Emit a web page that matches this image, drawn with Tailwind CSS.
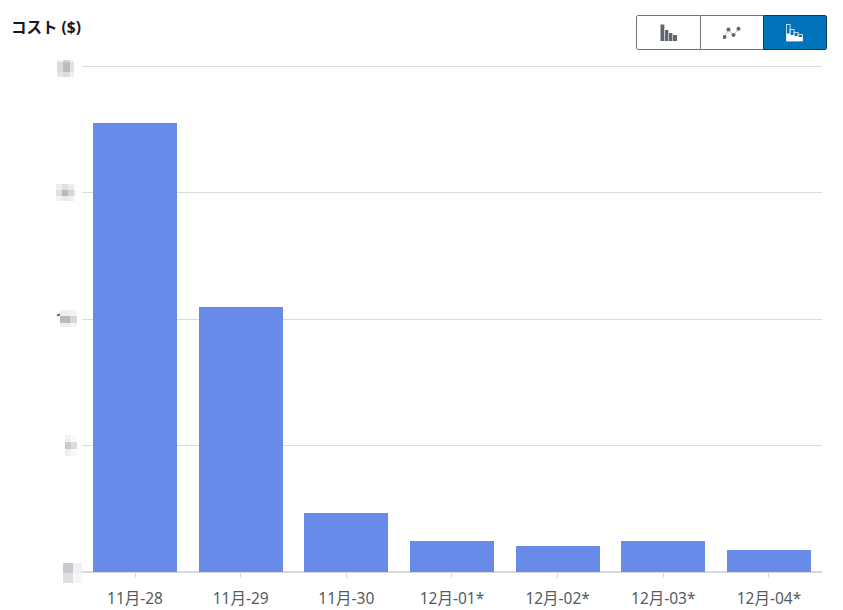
<!DOCTYPE html>
<html lang="ja">
<head>
<meta charset="utf-8">
<script src="https://cdn.jsdelivr.net/npm/@tailwindcss/browser@4"></script>
</head>
<body class="bg-white">
<div class="relative w-[843px] h-[610px] overflow-hidden font-['Noto_Sans','Noto_Sans_CJK_JP',sans-serif]">
  <!-- header -->
  <div class="flex items-start justify-between pl-[11px] pr-4 pt-[15px] h-[66px]">
    <h2 class="text-[15.5px] leading-[24px] font-bold text-[#16191f]">コスト ($)</h2>
    <div class="flex w-[191px] h-[35px] rounded-[2px] overflow-hidden">
      <button class="w-[65px] flex items-center justify-center border border-[#707376] rounded-l-[2px] bg-white">
        <svg width="18" height="18" viewBox="0 0 18 18" fill="#5f6670"><rect x="0.5" y="0.5" width="3.8" height="16.5"/><rect x="5" y="6" width="3.4" height="11"/><rect x="9" y="9" width="3.4" height="8"/><rect x="13" y="11" width="4" height="6"/></svg>
      </button>
      <button class="w-[62px] flex items-center justify-center border-y border-[#707376] bg-white">
        <svg width="18" height="14" viewBox="0 0 18 14" fill="#5f6670"><path d="M1.5 11 L5.5 3.5 L10.5 9 L15.5 2.7" fill="none" stroke="#9aa0a6" stroke-width="0.7"/><circle cx="1.5" cy="11" r="2"/><circle cx="5.5" cy="3.5" r="2"/><circle cx="10.5" cy="9" r="2"/><circle cx="15.5" cy="2.7" r="2"/></svg>
      </button>
      <button class="w-[64px] flex items-center justify-center border border-[#0a3d66] rounded-r-[2px] bg-[#0073bb]">
        <svg width="18" height="18" viewBox="0 0 18 18" fill="none" stroke="#cfe5f3" stroke-width="0.9"><rect x="0.5" y="0.5" width="3.6" height="16.5"/><rect x="4.1" y="5.5" width="4" height="11.5"/><rect x="8.1" y="8.5" width="4" height="8.5"/><rect x="12.1" y="10.5" width="4.4" height="6.5"/><path d="M0.5 9.5H4.1V11H8.1V12H12.1V13H16.5V17H0.5Z" fill="#fff" stroke="none"/></svg>
      </button>
    </div>
  </div>

  <!-- chart -->
  <div class="flex">
    <!-- y axis with pixelated labels -->
    <div class="w-[82px] h-[506px] relative shrink-0">
      <div class="absolute left-[57px] top-[-6px] grid grid-cols-[6px_7px_4px] grid-rows-[2px_10px_5px]">
        <div class="bg-[#f1f1f3]"></div><div class="bg-[#d6d6da]"></div><div class="bg-[#f3f3f5]"></div>
        <div class="bg-[#dcdce0]"></div><div class="bg-[#bcbcc1]"></div><div class="bg-[#e2e2e5]"></div>
        <div class="bg-[#e4e4e7]"></div><div class="bg-[#dcdce0]"></div><div class="bg-[#f0f0f2]"></div>
      </div>
      <div class="absolute left-[56px] top-[118px] grid grid-cols-[6px_6px_6px_3px] grid-rows-[6px_6px_5px]">
        <div class="bg-[#eeeef0]"></div><div class="bg-[#e0e0e4]"></div><div class="bg-[#ececee]"></div><div class="bg-[#fafafa]"></div>
        <div class="bg-[#dfdfe3]"></div><div class="bg-[#b9b9be]"></div><div class="bg-[#d5d5d9]"></div><div class="bg-[#f5f5f6]"></div>
        <div class="bg-[#f3f3f5]"></div><div class="bg-[#e8e8ea]"></div><div class="bg-[#f0f0f2]"></div><div class="bg-[#fcfcfc]"></div>
      </div>
      <div class="absolute left-[60px] top-[244px] grid grid-cols-[10px_7px] grid-rows-[6px_7px_4px]">
        <div class="bg-[#eeeef0]"></div><div class="bg-[#f4f4f6]"></div>
        <div class="bg-[#b9b9be]"></div><div class="bg-[#d8d8dc]"></div>
        <div class="bg-[#eeeef0]"></div><div class="bg-[#f4f4f6]"></div>
      </div>
      <div class="absolute left-[57px] top-[248px] w-[3px] h-[2px] -rotate-[25deg] bg-[#5a5f66]"></div>
      <div class="absolute left-[65px] top-[369px] grid grid-cols-[6px_6px] grid-rows-[7px_7px_7px]">
        <div class="bg-[#f0f0f2]"></div><div class="bg-[#fafafa]"></div>
        <div class="bg-[#c9cbce]"></div><div class="bg-[#dcdde0]"></div>
        <div class="bg-[#f0f0f2]"></div><div class="bg-[#f8f8f9]"></div>
      </div>
      <div class="absolute left-[63px] top-[497px] grid grid-cols-[10px_9px] grid-rows-[10px_10px]">
        <div class="bg-[#cacace]"></div><div class="bg-[#f0f0f2]"></div>
        <div class="bg-[#e0e0e3]"></div><div class="bg-[#f6f6f7]"></div>
      </div>
    </div>

    <!-- plot -->
    <div class="relative w-[740px] h-[507px] border-b-2 border-[#d8d9da]">
      <div class="absolute inset-x-0 top-0 h-[380px] flex flex-col justify-between">
        <div class="h-px bg-[#dbdcde]"></div>
        <div class="h-px bg-[#dbdcde]"></div>
        <div class="h-px bg-[#dbdcde]"></div>
        <div class="h-px bg-[#dbdcde]"></div>
      </div>
      <div class="absolute inset-x-0 top-0 bottom-[-1px] pl-[11px] flex items-end gap-[21.67px]">
        <div class="w-[84px] h-[449px] bg-[#688ae8]"></div>
        <div class="w-[84px] h-[265px] bg-[#688ae8]"></div>
        <div class="w-[84px] h-[59px] bg-[#688ae8]"></div>
        <div class="w-[84px] h-[31px] bg-[#688ae8]"></div>
        <div class="w-[84px] h-[26px] bg-[#688ae8]"></div>
        <div class="w-[84px] h-[31px] bg-[#688ae8]"></div>
        <div class="w-[84px] h-[22px] bg-[#688ae8]"></div>
      </div>
    </div>
  </div>

  <!-- x axis -->
  <div class="flex pl-[93px] gap-[21.67px] text-[15.5px] leading-[20px] text-[#545b64]">
    <div class="w-[84px] flex flex-col items-center"><div class="w-px h-[5px] bg-[#d8d9da]"></div><span class="mt-[10px] whitespace-nowrap">11月-28</span></div>
    <div class="w-[84px] flex flex-col items-center"><div class="w-px h-[5px] bg-[#d8d9da]"></div><span class="mt-[10px] whitespace-nowrap">11月-29</span></div>
    <div class="w-[84px] flex flex-col items-center"><div class="w-px h-[5px] bg-[#d8d9da]"></div><span class="mt-[10px] whitespace-nowrap">11月-30</span></div>
    <div class="w-[84px] flex flex-col items-center"><div class="w-px h-[5px] bg-[#d8d9da]"></div><span class="mt-[10px] whitespace-nowrap">12月-01*</span></div>
    <div class="w-[84px] flex flex-col items-center"><div class="w-px h-[5px] bg-[#d8d9da]"></div><span class="mt-[10px] whitespace-nowrap">12月-02*</span></div>
    <div class="w-[84px] flex flex-col items-center"><div class="w-px h-[5px] bg-[#d8d9da]"></div><span class="mt-[10px] whitespace-nowrap">12月-03*</span></div>
    <div class="w-[84px] flex flex-col items-center"><div class="w-px h-[5px] bg-[#d8d9da]"></div><span class="mt-[10px] whitespace-nowrap">12月-04*</span></div>
  </div>
</div>
</body>
</html>
